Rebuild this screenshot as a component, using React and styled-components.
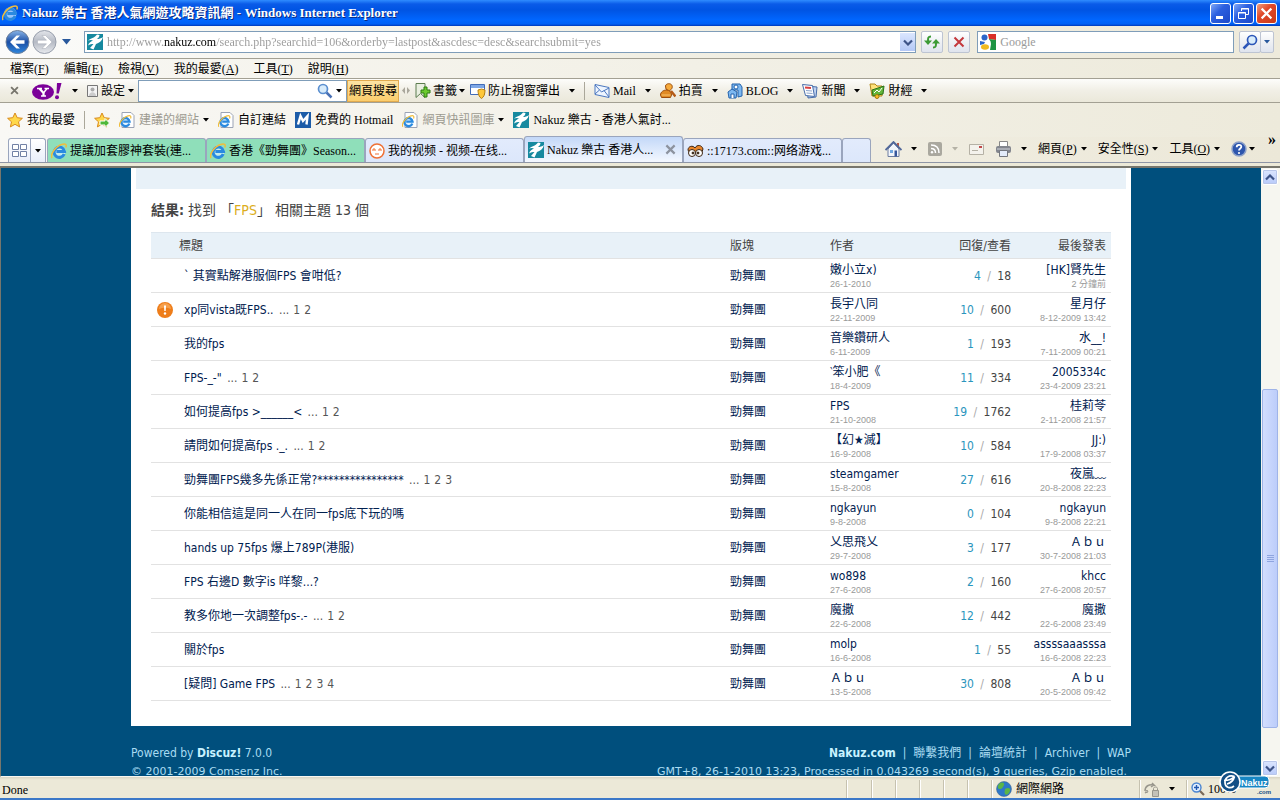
import styled, { createGlobalStyle } from 'styled-components';

const GlobalStyle = createGlobalStyle`
   * {
      box-sizing: border-box;
   }

   body {
      margin: 0;
      overflow: hidden;
      font-family: 'Liberation Serif', 'Noto Sans CJK TC', 'Noto Sans CJK SC', serif;
      font-size: 12px;
      line-height: 16px;
      color: #000;
   }

   button, input {
      font: inherit;
      color: inherit;
      margin: 0;
   }

   a {
      color: inherit;
      text-decoration: none;
   }

   svg {
      display: block;
      flex: none;
   }
`

const Window = styled.div`
   display: flex;
   flex-direction: column;
   height: 100vh;
   background: #ece9d8;
   border-bottom: 2px solid #3b78c8;
`

const TitleBar = styled.header`
   display: flex;
   align-items: center;
   flex: none;
   gap: 4px;
   height: 26px;
   padding: 0 3px 0 2px;
   background: linear-gradient(#2f8cff 0, #0a5be8 4px, #0054e3 10px, #0066ff 20px, #0060f5 24px, #0038b8 26px);

   h1 {
      flex: 1;
      margin: 0;
      font-size: 13px;
      color: #fff;
      text-shadow: 1px 1px 0 #0a2a80;
      white-space: nowrap;
   }
`

const WindowButton = styled.button`
   display: flex;
   align-items: center;
   justify-content: center;
   width: 21px;
   height: 21px;
   padding: 0;
   border: 1px solid #fff;
   border-radius: 3px;
   background: ${({ $close }) => ($close
      ? 'linear-gradient(135deg, #f0a080, #e0492a 40%, #c83a18)'
      : 'linear-gradient(135deg, #7fa8f8, #2c60e0 40%, #1c48c8)')};
`

const WindowButtons = styled.div`
   display: flex;
   gap: 2px;
`

const AddressBar = styled.form`
   display: flex;
   align-items: center;
   flex: none;
   height: 33px;
   padding: 0 6px 0 5px;
   background: linear-gradient(90deg, #fbfbfa, #f1efe4 50%, #eeeadb);
   border-bottom: 1px solid #a3a093;
`

const RoundButton = styled.button`
   padding: 0;
   border: none;
   background: none;
`

const HistoryButtons = styled.div`
   display: flex;
   align-items: center;
   gap: 2px;
   margin-right: 12px;
`

const Field = styled.div`
   display: flex;
   align-items: center;
   flex: ${({ $grow }) => $grow};
   min-width: 0;
   height: 22px;
   gap: 4px;
   padding-left: 2px;
   background: #fff;
   border: 1px solid #7f9db9;

   input {
      flex: 1;
      min-width: 0;
      padding: 0;
      border: none;
      outline: none;
      background: none;
      color: #8c8c8c;
   }

   input::placeholder {
      color: #9a9a9a;
   }
`

/* greys out everything in the url but the domain */
const UrlInput = styled.input`
   && {
      color: transparent;
      background: linear-gradient(90deg, #9a9a9a 56px, #000 56px, #000 109px, #9a9a9a 109px);
      background-clip: text;
      -webkit-background-clip: text;
   }
`

const DropButton = styled.button`
   display: flex;
   align-items: center;
   justify-content: center;
   width: 15px;
   height: 18px;
   padding: 0;
   border: none;
   background: linear-gradient(#dbe6fe, #b4c8f6);
`

const SquareButton = styled.button`
   display: flex;
   align-items: center;
   justify-content: center;
   width: ${({ $width }) => $width || 22}px;
   height: 22px;
   margin-left: ${({ $joined }) => ($joined ? -1 : 5)}px;
   padding: 0;
   border: 1px solid #bdc4d2;
   border-radius: 2px;
   background: linear-gradient(#fff, #eef0f4 50%, #dfe4ee);
`

const MenuBar = styled.nav`
   display: flex;
   align-items: center;
   flex: none;
   gap: 15px;
   height: 20px;
   padding-left: 10px;
   background: linear-gradient(90deg, #f8f7f3, #edeadb);
   border-bottom: 1px solid #a3a093;
`

const PlainButton = styled.button`
   display: flex;
   align-items: center;
   gap: ${({ $gap }) => $gap || 0}px;
   padding: 0;
   border: none;
   background: none;
   color: ${({ $dim }) => ($dim ? '#9c9a90' : '#000')};
   white-space: nowrap;
`

const YahooBar = styled.div`
   display: flex;
   align-items: center;
   flex: none;
   height: 24px;
   padding-left: 10px;
   background: linear-gradient(#fdfdfb, #f1efe6 50%, #ebe8da);
   border-bottom: 1px solid #a3a093;
`

const YahooGroup = styled.div`
   display: flex;
   align-items: center;
   gap: ${({ $gap }) => $gap}px;
   margin-left: ${({ $left }) => $left || 0}px;
`

const YahooSearch = styled.div`
   display: flex;
   align-items: center;
   gap: 3px;
   width: 209px;
   height: 22px;
   margin-left: 4px;
   padding-right: 4px;
   background: #fff;
   border: 1px solid #7f9db9;

   input {
      flex: 1;
      min-width: 0;
      height: 18px;
      border: none;
      outline: none;
   }
`

const SearchButton = styled.button`
   width: 52px;
   height: 22px;
   padding: 0;
   border: 1px solid #e0a94e;
   background: linear-gradient(#fde3a4, #fbcd6c);
   white-space: nowrap;
`

const Divider = styled.span`
   flex: none;
   width: 1px;
   height: 18px;
   background: #aaa79a;
`

const FavoritesBar = styled.div`
   display: flex;
   align-items: center;
   flex: none;
   gap: 9px;
   height: 34px;
   padding-left: 7px;
   background: linear-gradient(90deg, #f9f8f5, #edeadb);
`

const TabBar = styled.div`
   display: flex;
   align-items: flex-end;
   flex: none;
   height: 26px;
   padding-left: 8px;
   background: linear-gradient(90deg, #f9f8f5, #ece8d8);
   border-bottom: 1px solid #8e95a5;
`

const QuickTabs = styled.div`
   display: flex;
   height: 24px;
   margin-right: 1px;
   background: linear-gradient(#fff, #e9eefa);
   border: 1px solid #9aa5bd;
   border-bottom: none;
   border-radius: 3px 3px 0 0;

   button {
      display: flex;
      align-items: center;
      justify-content: center;
      width: 21px;
      padding: 0;
      border: none;
      background: none;
   }

   button + button {
      width: 15px;
      border-left: 1px solid #9aa5bd;
   }
`

const tabColors = {
   green: '#8fdfba',
   blue: 'linear-gradient(#e2ebfc, #dce7fb)',
   active: 'linear-gradient(#c3d8f8, #f4f8ff)',
}

const Tab = styled.div`
   display: flex;
   align-items: center;
   flex: 0 1 ${({ $empty }) => ($empty ? 29 : 159)}px;
   min-width: 0;
   height: ${({ $tone }) => ($tone === 'active' ? 26 : 24)}px;
   padding: 0 6px 0 3px;
   background: ${({ $tone }) => tabColors[$tone]};
   border: 1px solid #9aa5bd;
   border-bottom: none;
   border-radius: 3px 3px 0 0;

   a {
      display: flex;
      align-items: center;
      flex: 1;
      gap: 3px;
      white-space: nowrap;
   }
`

const CommandBar = styled.div`
   display: flex;
   align-items: center;
   flex: 1;
   gap: 11px;
   height: 26px;
   padding: 0 4px 0 14px;
`

const Chevron = styled.button`
   align-self: flex-start;
   margin-left: auto;
   padding: 0;
   border: none;
   background: none;
   font-size: 16px;
   font-weight: bold;
   line-height: 8px;
`

const Viewport = styled.div`
   display: flex;
   flex: 1;
   min-height: 0;
   margin-top: 3px;
   background: #004f7d;
   border: solid #77766c;
   border-width: 2px 0 0 1px;
   border-bottom: 1px solid #f7f6f0;
`

const Page = styled.main`
   flex: 1;
   min-width: 0;
   overflow: hidden;
   font-family: 'DejaVu Sans Condensed', 'Noto Sans CJK TC', sans-serif;
   color: #444;
`

const PageInner = styled.div`
   width: 100%;
   max-width: 1000px;
   margin: 0 auto;
`

const Panel = styled.section`
   padding: 0 5px 25px;
   background: #fff;

   &::before {
      content: '';
      display: block;
      height: 21px;
      background: #e8f1f8;
   }
`

const Results = styled.div`
   padding: 0 15px;

   h2 {
      margin: 12px 0;
      font-size: 14px;
      line-height: 19px;
      font-weight: normal;
   }

   em {
      font-style: normal;
      color: #dcae1c;
   }
`

const ThreadTable = styled.table`
   width: 100%;
   table-layout: fixed;
   border-collapse: collapse;

   th, td {
      padding: 0;
      border-bottom: 1px solid #e2e2e2;
      text-align: left;
      font-weight: normal;
      white-space: nowrap;
   }

   th {
      height: 26px;
      background: #e8f1f8;
      border-top: 1px solid #dde6ee;
   }

   td {
      height: 34px;
   }

   th:nth-last-child(-n+2), td:nth-last-child(-n+2) {
      text-align: right;
   }

   th:last-child, td:last-child {
      padding-right: 5px;
   }

   td:nth-child(1) {
      padding-left: 6px;
   }

   td:nth-child(2) {
      padding-left: 5px;
   }

   a {
      color: #00204f;
   }
`

const Column = styled.col`
   width: ${({ $width }) => $width}px;
`

const Pages = styled.span`
   margin-left: 2px;
   color: #555;

   a {
      color: #555;
      margin-left: 4px;
   }
`

const Stamp = styled.span`
   display: block;
   font-family: 'Liberation Sans', 'Noto Sans CJK TC', sans-serif;
   font-size: 9px;
   line-height: 12px;
   color: #999;
`

const Counts = styled.td`
   color: #aaa;

   strong {
      margin-right: 3px;
      font-weight: normal;
      color: #2a95bd;
   }

   span {
      margin-left: 3px;
      color: #444;
   }
`

const Footer = styled.footer`
   display: flex;
   justify-content: space-between;
   padding-top: 18px;
   color: #a9dcf2;
   line-height: 18px;

   p {
      margin: 0;
   }

   b {
      color: #c8f2ff;
   }

   small {
      display: block;
      font-family: 'DejaVu Sans', sans-serif;
      font-size: 11px;
      line-height: 20px;
   }
`

const FooterLinks = styled.div`
   text-align: right;

   nav {
      display: flex;
      justify-content: flex-end;
      gap: 7px;
   }

   small {
      padding-right: 4px;
   }
`

const ScrollBar = styled.div`
   display: flex;
   flex-direction: column;
   flex: none;
   width: 19px;
   padding: 1px 2px 0 1px;
   background: #f6f6f0;

   button {
      display: flex;
      align-items: center;
      justify-content: center;
      height: 16px;
      padding: 0;
      border: 1px solid #fff;
      border-radius: 2px;
      background: linear-gradient(#dce6fe, #b8cafa);
      box-shadow: 0 0 0 1px #b8c6ea inset;
   }
`

const Track = styled.div`
   flex: 1;
   display: flex;
   flex-direction: column;

   &::before {
      content: '';
      flex: 205;
   }

   &::after {
      content: '';
      flex: 32;
   }
`

const Thumb = styled.div`
   display: flex;
   align-items: center;
   justify-content: center;
   flex: 338;
   border: 1px solid #9fb4e8;
   border-radius: 2px;
   background: linear-gradient(90deg, #d2defe, #bccdfa);
`

const StatusBar = styled.footer`
   position: relative;
   display: flex;
   align-items: stretch;
   flex: none;
   height: 21px;
   padding: 3px 7px 0 2px;
   line-height: 20px;
   background: linear-gradient(#d8d4c4, #ece9d8 3px);
`

const StatusText = styled.span`
   flex: 1;
`

const StatusCell = styled.span`
   display: flex;
   align-items: center;
   gap: ${({ $gap }) => $gap || 4}px;
   width: ${({ $width }) => $width}px;
   padding-left: 4px;
   border-left: 1px solid #c6c2b0;
   box-shadow: inset 1px 0 0 #fff;
`

const Watermark = styled.div`
   position: absolute;
   right: 8px;
   bottom: 2px;
`

const Caret = ({ color = '#000' }) => (
   <svg width="6" height="4" viewBox="0 0 6 4"><path d="M0 0h6L3 3.5z" fill={color} /></svg>
)

const IeIcon = ({ page }) => (
   <svg width="16" height="16" viewBox="0 0 16 16">
      {page && <path d="M3 .5h9l3 3v12H3z" fill="#fff" stroke="#9ba3b5" />}
      <g transform={page ? 'translate(0 3) scale(.78)' : undefined}>
         <circle cx="8.300" cy="8.500" r="6.200" fill="#d9efff" fillOpacity=".7" />
         <path d="M13.200 11A5.200 5.200 0 1 1 13.500 8.500H5.400" fill="none" stroke="#2a8ae0" strokeWidth="3" />
         <path d="M1 15C-1 12 4 3.500 10.500 1.500 14.500 0 16 1.500 14.800 4.500" fill="none" stroke="#f0bd3c" strokeWidth="1.500" />
      </g>
   </svg>
)

const NakuzIcon = () => (
   <svg width="16" height="16" viewBox="0 0 16 16">
      <path d="M0 0h16v16H0z" fill="#16899f" />
      <path d="M1 6.500C4 4 7 4.500 10 .5l2.500.5c0 2-1.500 3-2.500 4 2 0 4-.5 6-2-1 4-4 6-7 7l-2.500 5.500L3 14l3.500-4c-2 0-3.500 0-5.500 1.500 1-3 3-4 5-5-1.500-1-3.500-.5-5 0z" fill="#fff" />
   </svg>
)

const StarIcon = ({ add }) => (
   <svg width="16" height="16" viewBox="0 0 16 16">
      <path d="M8 1l2.200 4.700 5.200.6-3.900 3.500 1.100 5.100L8 12.300l-4.600 2.600 1.100-5.100L.6 6.300l5.200-.6z" fill="#ffd84a" stroke="#d98a1c" />
      {add && <path d="M6 9h5V6.500l4.500 4.500-4.500 4.500V13H6z" fill="#4fb83a" stroke="#fff" />}
   </svg>
)

const BackIcon = () => (
   <svg width="25" height="26" viewBox="0 0 25 26">
      <defs>
         <linearGradient id="back" x2="0" y2="1">
            <stop offset="0" stopColor="#88b4e8" /><stop offset=".5" stopColor="#1c4fa5" /><stop offset="1" stopColor="#2e86dd" />
         </linearGradient>
      </defs>
      <circle cx="12.500" cy="13" r="11.500" fill="url(#back)" stroke="#6d7f9a" />
      <path d="M5 13l6.500-6.500H15l-4.500 4.700h9v3.600h-9l4.500 4.700h-3.500z" fill="#fff" />
   </svg>
)

const ForwardIcon = () => (
   <svg width="25" height="26" viewBox="0 0 25 26">
      <defs>
         <linearGradient id="forward" x2="0" y2="1">
            <stop offset="0" stopColor="#e3e5ea" /><stop offset=".5" stopColor="#b5bac4" /><stop offset="1" stopColor="#e9ebef" />
         </linearGradient>
      </defs>
      <circle cx="12.500" cy="13" r="11.500" fill="url(#forward)" stroke="#989fac" />
      <path d="M20 13l-6.500-6.500H10l4.500 4.700h-9v3.600h9L10 19.500h3.500z" fill="#fff" stroke="#a6abb5" strokeWidth=".5" />
   </svg>
)

const RefreshIcon = () => (
   <svg width="16" height="14" viewBox="0 0 16 14" fill="none" stroke="#3c9b35" strokeWidth="2">
      <path d="M7 1.500C4 1.500 4 3 4 6" /><path d="M0 5.500h8L4 10z" fill="#3c9b35" stroke="none" />
      <path d="M9 12.500c3 0 3-1.500 3-4.500" /><path d="M8 8.500h8L12 4z" fill="#3c9b35" stroke="none" />
   </svg>
)

const CrossIcon = ({ size = 12, color, width = 2 }) => (
   <svg width={size} height={size} viewBox="0 0 12 12"><path d="M1.500 1.500l9 9m0-9l-9 9" stroke={color} strokeWidth={width} /></svg>
)

const MagnifierIcon = ({ flip }) => (
   <svg width="16" height="16" viewBox="0 0 16 16">
      <g transform={flip ? 'matrix(-1 0 0 1 16 0)' : undefined}>
         <path d="M9.500 9.500l5 5" stroke={flip ? '#2c56b8' : '#4a71b5'} strokeWidth="2.500" />
         <circle cx="6" cy="6" r="4.500" fill="#d8ecfb" stroke={flip ? '#2c56b8' : '#5b8fd0'} strokeWidth="1.700" />
      </g>
   </svg>
)

const GoogleIcon = () => (
   <svg width="16" height="16" viewBox="0 0 16 16">
      <path d="M0 0h16v16H0z" fill="#fff" />
      <path d="M8 0h8v6L9 5z" fill="#d92f28" /><path d="M9 5l7 1v10H10l1-6z" fill="#1d9444" />
      <circle cx="4.500" cy="3.500" r="3" fill="#2b65c9" /><path d="M0 7l5 1-1 2-4 1z" fill="#2b65c9" />
      <ellipse cx="5" cy="13" rx="4" ry="2.800" fill="#f0b91e" />
      <path d="M7 7c3-1 4 1 2 4" fill="none" stroke="#fff" strokeWidth="1.500" />
   </svg>
)

const YahooIcon = () => (
   <svg width="30" height="18" viewBox="0 0 30 18">
      <ellipse cx="11" cy="10" rx="11" ry="7.800" fill="#7b0099" />
      <path d="M5 6.500h5M12.500 6.500h4.500M9 14h5" stroke="#fff" strokeWidth="1.300" fill="none" />
      <path d="M7.500 6.500l4 4.500v3" stroke="#fff" strokeWidth="2.200" fill="none" /><path d="M15 6.500L11.500 11" stroke="#fff" strokeWidth="1.400" />
      <path d="M25 1h4.500l-2.700 10.500h-2.300z" fill="#7b0099" /><circle cx="25" cy="15.300" r="2" fill="#7b0099" />
   </svg>
)

const SettingsIcon = () => (
   <svg width="11" height="12" viewBox="0 0 11 12">
      <path d="M.5.5h10v11H.5z" fill="#f4f4f4" stroke="#777" />
      <circle cx="5.500" cy="4.500" r="2" fill="#aaa" /><path d="M2 11c0-5 7-5 7 0z" fill="#ccc" />
   </svg>
)

const BookmarkIcon = () => (
   <svg width="16" height="16" viewBox="0 0 16 16">
      <path d="M1 .5h9v14l-4.500-4L1 14.500z" fill="#e9efe0" stroke="#5d7d50" />
      <path d="M9 4h3v3h3v3h-3v4H9v-4H6V7h3z" fill="#6cca2e" stroke="#2c7a12" />
   </svg>
)

const PopupIcon = () => (
   <svg width="16" height="16" viewBox="0 0 16 16">
      <path d="M.5 1.500h14v10H.5z" fill="#fff" stroke="#416cb8" /><path d="M1 2h13v3H1z" fill="#7ea7e6" />
      <path d="M8 7l3.500-1L15 7c0 4-1 7-3.500 8.500C9 14 8 11 8 7z" fill="#ffc83a" stroke="#b98213" />
   </svg>
)

const EnvelopeIcon = () => (
   <svg width="16" height="16" viewBox="0 0 16 16" stroke="#4c78c0" fill="#eef5ff">
      <path d="M1 1.500l14 3v10l-14-3z" /><path d="M1 2l6.500 7L15 5M1 11l4.500-4M15 14l-5-6.500" fill="none" />
   </svg>
)

const AuctionIcon = () => (
   <svg width="16" height="16" viewBox="0 0 16 16" stroke="#9a4c0c">
      <path d="M5.500 3C6 0 11 0 12 2.500S11 7 9 8L6 6z" fill="#f7ab3c" />
      <path d="M.5 12c0-3 3-5 6-5s5 2 5 5l-1 2.500h-9z" fill="#e08a24" /><path d="M1.500 12h9" stroke="#f9c56e" />
      <path d="M11 8l4.500 5.500" strokeWidth="2.500" stroke="#b45a16" />
   </svg>
)

const BlogIcon = () => (
   <svg width="16" height="16" viewBox="0 0 16 16" stroke="#2563ac" fill="#7db8f0">
      <path d="M5 1h8l2 3v9l-4 1V7H5z" /><circle cx="9" cy="4" r="2" fill="#fff" />
      <path d="M1 9l4-3 5 3-1 6H2z" /><path d="M4 15v-4h3v4" fill="#fff" />
   </svg>
)

const NewsIcon = () => (
   <svg width="16" height="16" viewBox="0 0 16 16" stroke="#476ca9" fill="#fff">
      <path d="M5 3l10 1-1 10-8 1z" fill="#bfd2f0" /><path d="M.5 1.500l10 1 2 11-9-1z" />
      <path d="M3 4.500l6 .5" stroke="#d84040" strokeWidth="2" /><path d="M4 7.500l6 .5M4.500 10l6 .5" stroke="#8ba4cc" />
   </svg>
)

const FinanceIcon = () => (
   <svg width="16" height="16" viewBox="0 0 16 16">
      <path d="M1 1h5l2 2h5v10H3z" fill="#ffe27a" stroke="#b18618" />
      <path d="M3 7l12-4-1 8-10 2z" fill="#63b73b" stroke="#2a711a" /><path d="M5 10l3-3 2 2 3-4" fill="none" stroke="#fff" />
      <circle cx="8" cy="13.500" r="2" fill="#f3bd25" stroke="#a4780c" />
   </svg>
)

const MIcon = () => (
   <svg width="16" height="16" viewBox="0 0 16 16">
      <path d="M0 0h16v16H0z" fill="#1c5ca8" />
      <path d="M3 12.500L5.500 4l2.500 5 4.500-5-1 8.500" fill="none" stroke="#fff" strokeWidth="2.400" />
   </svg>
)

const GridIcon = () => (
   <svg width="15" height="13" viewBox="0 0 15 13" fill="#fff" stroke="#7181a5">
      <path d="M.5.5h6v5h-6zM8.500.5h6v5h-6zM.5 7.500h6v5h-6zM8.500 7.500h6v5h-6z" />
   </svg>
)

const TudouIcon = () => (
   <svg width="16" height="16" viewBox="0 0 16 16" fill="none" stroke="#ef7136">
      <circle cx="8" cy="8" r="7" fill="#fff" strokeWidth="1.500" /><path d="M3 7h4M9 7h4M5 5v2M11 5v2M6 11h4" />
   </svg>
)

const EyesIcon = () => (
   <svg width="17" height="14" viewBox="0 0 17 14" stroke="#3a2412">
      <path d="M1 6c0-4 5-5 7-2 2-4 7-3 8 1l-1 3H2z" fill="#e8852b" />
      <circle cx="5" cy="9" r="3.500" fill="#fff" /><circle cx="12" cy="9" r="3.500" fill="#fff" />
      <circle cx="6" cy="9" r="1" fill="#222" /><circle cx="11" cy="9" r="1" fill="#222" />
   </svg>
)

const HomeIcon = () => (
   <svg width="17" height="17" viewBox="0 0 17 17">
      <path d="M12 2h2v5h-2z" fill="#b85848" />
      <path d="M3 8l5.500-6L14 8v7.500H3z" fill="#f2f5fb" stroke="#6c7da0" />
      <path d="M.5 9L8.500 1l8 8" fill="none" stroke="#52689a" strokeWidth="1.800" />
      <path d="M5 9h3v3H5z" fill="#71a7e0" /><path d="M9.500 9.500H12v6H9.500z" fill="#36569b" />
   </svg>
)

const RssIcon = () => (
   <svg width="14" height="14" viewBox="0 0 14 14">
      <rect width="14" height="14" rx="2" fill="#aaa89f" />
      <path d="M3 3c5 0 8 3 8 8M3 6.500c3 0 4.500 1.500 4.500 4.500" fill="none" stroke="#fff" strokeWidth="1.500" />
      <circle cx="4" cy="10.200" r="1.200" fill="#fff" />
   </svg>
)

const ReadMailIcon = () => (
   <svg width="15" height="11" viewBox="0 0 15 11">
      <path d="M.5.5h14v10H.5z" fill="#f4f2ec" stroke="#b5b1a5" /><path d="M10 2h3v2h-3z" fill="#c04848" /><path d="M3 6.500h6" stroke="#b5b1a5" />
   </svg>
)

const PrinterIcon = () => (
   <svg width="17" height="16" viewBox="0 0 17 16">
      <path d="M4.500.5h8v6h-8z" fill="#fff" stroke="#888" /><rect x="1" y="5" width="15" height="7" rx="2" fill="#83868e" />
      <path d="M2 8h13" stroke="#d0d3da" /><path d="M4.500 9.500h8v6h-8z" fill="#e4ecfa" stroke="#74777e" />
   </svg>
)

const HelpIcon = () => (
   <svg width="16" height="16" viewBox="0 0 16 16" fill="none">
      <circle cx="8" cy="8" r="7" fill="#2e56ad" stroke="#8fa2c8" strokeWidth="1.500" />
      <path d="M5.700 6.200c0-3 4.600-3 4.600-.4 0 1.700-2.300 1.700-2.300 3.700" stroke="#fff" strokeWidth="1.800" /><circle cx="8" cy="12" r="1.100" fill="#fff" />
   </svg>
)

const HotIcon = () => (
   <svg width="16" height="16" viewBox="0 0 16 16" role="img" aria-label="hot">
      <circle cx="8" cy="8" r="8" fill="#ee7d1a" /><path d="M2 7a6 6 0 0 1 12 0c-4-2-8-2-12 0z" fill="#f6a04c" />
      <path d="M7 3.500h2L8.700 9H7.300z" fill="#fff" /><circle cx="8" cy="11.500" r="1.200" fill="#fff" />
   </svg>
)

const ArrowIcon = ({ up }) => (
   <svg width="10" height="7" viewBox="0 0 10 7"><path d={up ? 'M1 5.500l4-4 4 4' : 'M1 1.500l4 4 4-4'} fill="none" stroke="#3d5387" strokeWidth="2.200" /></svg>
)

const GlobeIcon = () => (
   <svg width="16" height="16" viewBox="0 0 16 16">
      <circle cx="8" cy="8" r="7.500" fill="#2d78c8" stroke="#3a5f88" strokeWidth=".5" />
      <path d="M3 3c3-3 6-1 5 1S6 8 4 8 1 6 3 3zM9 8c3-2 6-1 5 2s-4 5-5 3 0-3 0-5z" fill="#5cb548" />
   </svg>
)

const PrivacyIcon = () => (
   <svg width="16" height="15" viewBox="0 0 16 15" fill="none" stroke="#98968c">
      <path d="M1 9c0-5 4-7 9-6L8 1m2 2L7 5" strokeWidth="1.500" /><path d="M8.500 8.500h6v6h-6z" fill="#c4c2b8" />
      <path d="M9.500 8.500V6.500c0-2 4-2 4 0v2M3 8l-2 3 3-1z" />
   </svg>
)

const ZoomIcon = () => (
   <svg width="14" height="14" viewBox="0 0 14 14">
      <path d="M8.500 8.500l4.500 4.500" stroke="#7a6a58" strokeWidth="2.200" />
      <circle cx="5.500" cy="5.500" r="4.500" fill="#e3f0ff" stroke="#4a85d0" strokeWidth="1.400" />
      <path d="M3 5.500h5M5.500 3v5" stroke="#2058b0" strokeWidth="1.400" />
   </svg>
)

const NakuzBadge = () => (
   <svg width="53" height="25" viewBox="0 0 53 25">
      <rect x="14" y="5" width="36" height="12" rx="4" fill="#1686c4" stroke="#fff" />
      <circle cx="11" cy="11" r="10" fill="#124f86" stroke="#fff" strokeWidth="1.500" />
      <path d="M15.500 5.500C10 3.500 5.500 7 6 12s5.500 6 9 3M5 9.500c4 0 8-1 10.500-4-1 4-4 6.500-7.500 7.500" fill="none" stroke="#fff" strokeWidth="1.700" />
      <text x="22" y="15" fontFamily="Liberation Sans" fontWeight="700" fontSize="9" fill="#fff">Nakuz</text>
      <text x="38" y="23" fontFamily="Liberation Sans" fontWeight="700" fontSize="6" fill="#124f86">.com</text>
   </svg>
)

const menus = [['檔案', 'F'], ['編輯', 'E'], ['檢視', 'V'], ['我的最愛', 'A'], ['工具', 'T'], ['說明', 'H']]

const yahooLinks = [
   ['Mail', EnvelopeIcon],
   ['拍賣', AuctionIcon],
   ['BLOG', BlogIcon],
   ['新聞', NewsIcon],
   ['財經', FinanceIcon],
]

const tabs = [
   { title: '提議加套膠神套裝(連...', icon: IeIcon, tone: 'green' },
   { title: '香港《勁舞團》Season...', icon: IeIcon, tone: 'green' },
   { title: '我的视频 - 视频-在线...', icon: TudouIcon, tone: 'blue' },
   { title: 'Nakuz 樂古 香港人...', icon: NakuzIcon, tone: 'active' },
   { title: '::17173.com::网络游戏...', icon: EyesIcon, tone: 'blue' },
]

const threads = [
   { title: '` 其實點解港服個FPS 會咁低?', author: '嫩小立x)', date: '26-1-2010', replies: 4, views: 18, last: '[HK]賢先生', lastDate: '2 分鐘前' },
   { title: 'xp同vista既FPS..', pages: 2, hot: true, author: '長宇八同', date: '22-11-2009', replies: 10, views: 600, last: '星月仔', lastDate: '8-12-2009 13:42' },
   { title: '我的fps', author: '音樂鑽研人', date: '6-11-2009', replies: 1, views: 193, last: '水__!', lastDate: '7-11-2009 00:21' },
   { title: 'FPS-_-"', pages: 2, author: '‵笨小肥《', date: '18-4-2009', replies: 11, views: 334, last: '2005334c', lastDate: '23-4-2009 23:21' },
   { title: '如何提高fps >______<', pages: 2, author: 'FPS', date: '21-10-2008', replies: 19, views: 1762, last: '桂莉苓', lastDate: '2-11-2008 21:57' },
   { title: '請問如何提高fps ._.', pages: 2, author: '【幻★滅】', date: '16-9-2008', replies: 10, views: 584, last: 'JJ:)', lastDate: '17-9-2008 03:37' },
   { title: '勁舞團FPS幾多先係正常?****************', pages: 3, author: 'steamgamer', date: '15-8-2008', replies: 27, views: 616, last: '夜嵐﹏', lastDate: '20-8-2008 22:23' },
   { title: '你能相信這是同一人在同一fps底下玩的嗎', author: 'ngkayun', date: '9-8-2008', replies: 0, views: 104, last: 'ngkayun', lastDate: '9-8-2008 22:21' },
   { title: 'hands up 75fps 爆上789P(港服)', author: '乂思飛乂', date: '29-7-2008', replies: 3, views: 177, last: 'Ａｂｕ', lastDate: '30-7-2008 21:03' },
   { title: 'FPS 右邊D 數字is 咩黎...?', author: 'wo898', date: '27-6-2008', replies: 2, views: 160, last: 'khcc', lastDate: '27-6-2008 20:57' },
   { title: '教多你地一次調整fps-.-', pages: 2, author: '魔撒', date: '22-6-2008', replies: 12, views: 442, last: '魔撒', lastDate: '22-6-2008 23:49' },
   { title: '關於fps', author: 'molp', date: '16-6-2008', replies: 1, views: 55, last: 'assssaaasssa', lastDate: '16-6-2008 22:23' },
   { title: '[疑問] Game FPS', pages: 4, author: 'Ａｂｕ', date: '13-5-2008', replies: 30, views: 808, last: 'Ａｂｕ', lastDate: '20-5-2008 09:42' },
]

const Accel = ({ label, letter }) => <span>{label}(<u>{letter}</u>)</span>

const ThreadRow = ({ thread }) => (
   <tr>
      <td>{thread.hot && <HotIcon />}</td>
      <td>
         <a href="#thread">{thread.title}</a>
         {thread.pages && (
            <Pages> ...{Array.from({ length: thread.pages }, (_, i) => <a href="#page" key={i}>{i + 1}</a>)}</Pages>
         )}
      </td>
      <td><a href="#forum">勁舞團</a></td>
      <td><a href="#user">{thread.author}</a><Stamp>{thread.date}</Stamp></td>
      <Counts><strong>{thread.replies}</strong> / <span>{thread.views}</span></Counts>
      <td><a href="#user">{thread.last}</a><Stamp>{thread.lastDate}</Stamp></td>
   </tr>
)

const Chrome = () => (
   <>
      <TitleBar>
         <IeIcon />
         <h1>Nakuz 樂古 香港人氣網遊攻略資訊網 - Windows Internet Explorer</h1>
         <WindowButtons>
            <WindowButton aria-label="Minimize"><svg width="13" height="13"><path d="M2 9h7v3H2z" fill="#fff" /></svg></WindowButton>
            <WindowButton aria-label="Restore">
               <svg width="13" height="13" fill="none" stroke="#fff"><path d="M4.500 4V1.500h7v6H9M4 2h8M1.500 5.500h7v6h-7zM1 6h8" /></svg>
            </WindowButton>
            <WindowButton $close aria-label="Close"><CrossIcon size={13} color="#fff" width={2} /></WindowButton>
         </WindowButtons>
      </TitleBar>
      <AddressBar onSubmit={(e) => e.preventDefault()}>
         <HistoryButtons>
            <RoundButton type="button" aria-label="Back"><BackIcon /></RoundButton>
            <RoundButton type="button" aria-label="Forward"><ForwardIcon /></RoundButton>
            <RoundButton type="button" aria-label="Recent pages">
               <svg width="13" height="6" viewBox="0 0 13 6"><path d="M3 0h9L7.500 5.500z" fill="#28589c" /></svg>
            </RoundButton>
         </HistoryButtons>
         <Field $grow={836}>
            <NakuzIcon />
            <UrlInput aria-label="Address" defaultValue="http://www.nakuz.com/search.php?searchid=106&orderby=lastpost&ascdesc=desc&searchsubmit=yes" />
            <DropButton type="button" aria-label="Addresses"><ArrowIcon /></DropButton>
         </Field>
         <SquareButton type="button" aria-label="Refresh"><RefreshIcon /></SquareButton>
         <SquareButton type="button" aria-label="Stop"><CrossIcon color="#c4383c" /></SquareButton>
         <YahooGroup $left={7} />
         <Field $grow={255}>
            <GoogleIcon />
            <input aria-label="Search" placeholder="Google" />
         </Field>
         <SquareButton aria-label="Search"><MagnifierIcon flip /></SquareButton>
         <SquareButton type="button" $joined $width={14} aria-label="Search options"><Caret color="#28589c" /></SquareButton>
      </AddressBar>
      <MenuBar>
         {menus.map(([label, letter]) => <PlainButton key={letter}><Accel label={label} letter={letter} /></PlainButton>)}
      </MenuBar>
      <YahooBar>
         <YahooGroup $gap={9}>
            <PlainButton aria-label="Close toolbar"><CrossIcon size={9} color="#77756c" width={2.4} /></PlainButton>
            <YahooGroup $left={4} $gap={10}><YahooIcon /><Caret /></YahooGroup>
            <PlainButton $gap={3}><SettingsIcon />設定<Caret /></PlainButton>
         </YahooGroup>
         <YahooSearch>
            <input aria-label="Yahoo search" />
            <MagnifierIcon />
            <Caret />
         </YahooSearch>
         <SearchButton>網頁搜尋</SearchButton>
         <YahooGroup $left={3} $gap={5}>
            <svg width="8" height="7" viewBox="0 0 8 7" fill="#aaa79c"><path d="M3 0v7L0 3.500zM5 0v7l3-3.500z" /></svg>
            <PlainButton $gap={2}><BookmarkIcon />書籤<Caret /></PlainButton>
            <PlainButton $gap={2}><PopupIcon />防止視窗彈出</PlainButton>
            <YahooGroup $left={4} $gap={9}>
               <Caret />
               <Divider />
               {yahooLinks.map(([label, Icon]) => (
                  <PlainButton $gap={9} key={label}>
                     <YahooGroup $gap={3}><Icon />{label}</YahooGroup><Caret />
                  </PlainButton>
               ))}
            </YahooGroup>
         </YahooGroup>
      </YahooBar>
      <FavoritesBar>
         <PlainButton $gap={4}><StarIcon />我的最愛</PlainButton>
         <Divider />
         <PlainButton aria-label="Add to favorites"><StarIcon add /></PlainButton>
         <PlainButton $gap={4} $dim><IeIcon page />建議的網站<Caret /></PlainButton>
         <PlainButton $gap={4}><IeIcon page />自訂連結</PlainButton>
         <PlainButton $gap={4}><MIcon />免費的 Hotmail</PlainButton>
         <PlainButton $gap={4} $dim><IeIcon page />網頁快訊圖庫<Caret /></PlainButton>
         <PlainButton $gap={4}><NakuzIcon />Nakuz 樂古 - 香港人氣討...</PlainButton>
      </FavoritesBar>
      <TabBar>
         <QuickTabs>
            <button aria-label="Quick tabs"><GridIcon /></button>
            <button aria-label="Tab list"><Caret /></button>
         </QuickTabs>
         {tabs.map(({ title, icon: Icon, tone }) => (
            <Tab $tone={tone} key={title}>
               <a href="#tab"><Icon />{title}</a>
               {tone === 'active' && <PlainButton aria-label="Close tab"><CrossIcon color="#8d939f" size={11} width={2.4} /></PlainButton>}
            </Tab>
         ))}
         <Tab $tone="blue" $empty />
         <CommandBar>
            <PlainButton $gap={9} aria-label="Home"><HomeIcon /><Caret /></PlainButton>
            <PlainButton $gap={10} aria-label="Feeds"><RssIcon /><Caret color="#b5b2a6" /></PlainButton>
            <PlainButton aria-label="Read mail"><ReadMailIcon /></PlainButton>
            <PlainButton $gap={9} aria-label="Print"><PrinterIcon /><Caret /></PlainButton>
            <PlainButton $gap={4}><Accel label="網頁" letter="P" /><Caret /></PlainButton>
            <PlainButton $gap={4}><Accel label="安全性" letter="S" /><Caret /></PlainButton>
            <PlainButton $gap={4}><Accel label="工具" letter="O" /><Caret /></PlainButton>
            <PlainButton $gap={2} aria-label="Help"><HelpIcon /><Caret /></PlainButton>
            <Chevron aria-label="More">»</Chevron>
         </CommandBar>
      </TabBar>
   </>
)

const Forum = () => (
   <Page>
      <PageInner>
         <Panel>
            <Results>
               <h2><b>結果:</b> 找到 「<em>FPS</em>」 相關主題 13 個</h2>
               <ThreadTable>
                  <colgroup>
                     <Column $width={28} /><col /><Column $width={100} /><Column $width={100} /><Column $width={81} /><Column $width={100} />
                  </colgroup>
                  <thead>
                     <tr><th></th><th>標題</th><th>版塊</th><th>作者</th><th>回復/查看</th><th>最後發表</th></tr>
                  </thead>
                  <tbody>
                     {threads.map((thread) => <ThreadRow thread={thread} key={thread.title} />)}
                  </tbody>
               </ThreadTable>
            </Results>
         </Panel>
         <Footer>
            <p>
               Powered by <b>Discuz!</b> 7.0.0
               <small>© 2001-2009 Comsenz Inc.</small>
            </p>
            <FooterLinks>
               <nav>
                  <a href="#home"><b>Nakuz.com</b></a>
                  <span>|</span><a href="#contact">聯繫我們</a>
                  <span>|</span><a href="#stats">論壇統計</a>
                  <span>|</span><a href="#archiver">Archiver</a>
                  <span>|</span><a href="#wap">WAP</a>
               </nav>
               <small>GMT+8, 26-1-2010 13:23, Processed in 0.043269 second(s), 9 queries, Gzip enabled.</small>
            </FooterLinks>
         </Footer>
      </PageInner>
   </Page>
)

export default function App() {
   return (
      <Window>
         <GlobalStyle />
         <Chrome />
         <Viewport>
            <Forum />
            <ScrollBar>
               <button aria-label="Scroll up"><ArrowIcon up /></button>
               <Track>
                  <Thumb><svg width="7" height="8" stroke="#8ea5df"><path d="M0 .5h7M0 2.500h7M0 4.500h7M0 6.500h7" /></svg></Thumb>
               </Track>
               <button aria-label="Scroll down"><ArrowIcon /></button>
            </ScrollBar>
         </Viewport>
         <StatusBar>
            <StatusText>Done</StatusText>
            <StatusCell $width={25} />
            <StatusCell $width={24} />
            <StatusCell $width={24} />
            <StatusCell $width={24} />
            <StatusCell $width={24} />
            <StatusCell $width={24} />
            <StatusCell $width={148}><GlobeIcon />網際網路</StatusCell>
            <StatusCell $width={47} $gap={9}><PrivacyIcon /><Caret /></StatusCell>
            <StatusCell $width={87} $gap={3}><ZoomIcon />100%</StatusCell>
            <Watermark><NakuzBadge /></Watermark>
         </StatusBar>
      </Window>
   )
}
